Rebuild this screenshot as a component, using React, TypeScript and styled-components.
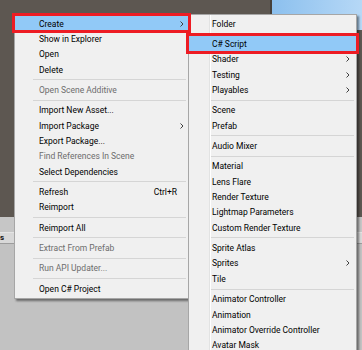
import React from "react";
import styled, { createGlobalStyle } from "styled-components";

const GlobalStyle = createGlobalStyle`
  html, body { margin: 0; padding: 0; }
  body {
    width: 362px;
    height: 350px;
    overflow: hidden;
    font-family: Roboto, "Liberation Sans", sans-serif;
  }
`;

const Screen = styled.div`
  position: relative;
  width: 362px;
  height: 350px;
  display: grid;
  grid-template-rows: 217px 1fr;
  overflow: hidden;
  background: #c2c2c2;
`;

const TopArea = styled.div`
  display: flex;
`;

const SceneView = styled.div`
  flex: 1;
  background: #5d5751;
`;

const GameView = styled.div`
  width: 90px;
  display: flex;
  flex-direction: column;
  border-left: 2px solid #46413c;
  background: #5d5751;
`;

const Sky = styled.div`
  height: 30px;
  background: linear-gradient(90deg, #8cc0ee, #b6d8f6);
`;

const ProjectPanel = styled.div`
  display: flex;
  flex-direction: column;
`;

const Toolbar = styled.div`
  height: 15px;
  background: #c6c6c6;
  border-bottom: 1px solid #e4e4e4;
`;

const TabRow = styled.div`
  height: 10px;
  background: #d8d8d8;
  border-bottom: 1px solid #9c9c9c;
  font-size: 8px;
  font-weight: bold;
  line-height: 10px;
  color: #111;
`;

const Menu = styled.div<{ $left: number; $width: number; $tall?: boolean }>`
  position: absolute;
  top: 14px;
  left: ${(p) => p.$left}px;
  width: ${(p) => p.$width}px;
  ${(p) => p.$tall && "height: 350px;"}
  box-sizing: border-box;
  padding: 1px 0;
  background: #f0f0f0;
  border: 1px solid #a6a6a6;
  box-shadow: 2px 2px 2px rgba(0, 0, 0, 0.45);
`;

const Gutter = styled.div`
  position: absolute;
  top: 0;
  bottom: 0;
  left: 20px;
  width: 1px;
  background: #e2e3e3;
  border-right: 1px solid #ffffff;
`;

const Row = styled.div<{ $indent: number; $right: number; $active?: boolean; $disabled?: boolean }>`
  position: relative;
  height: 15.35px;
  display: flex;
  align-items: center;
  padding-left: ${(p) => p.$indent}px;
  padding-right: ${(p) => p.$right}px;
  font-size: 8.5px;
  color: ${(p) => (p.$disabled ? "#6d6d6d" : "#000")};
  background: ${(p) => (p.$active ? "#91c9f7" : "transparent")};

  ${(p) =>
    p.$active &&
    `&::after {
      content: "";
      position: absolute;
      top: -3px;
      bottom: -2px;
      left: -3px;
      right: -3px;
      border: 3px solid #ed1c24;
      pointer-events: none;
      z-index: 2;
    }`}
`;

const Label = styled.span`
  flex: 1;
  white-space: nowrap;
`;

const Shortcut = styled.span`
  margin-right: 7px;
`;

const Separator = styled.div<{ $indent: number }>`
  height: 5px;
  display: flex;
  align-items: center;
  padding-left: ${(p) => p.$indent}px;
  padding-right: 2px;

  &::before {
    content: "";
    flex: 1;
    height: 1px;
    background: #d5d5d5;
  }
`;

type Item =
  | "sep"
  | { label: string; arrow?: boolean; active?: boolean; disabled?: boolean; shortcut?: string };

const mainItems: Item[] = [
  { label: "Create", arrow: true, active: true },
  { label: "Show in Explorer" },
  { label: "Open" },
  { label: "Delete" },
  "sep",
  { label: "Open Scene Additive", disabled: true },
  "sep",
  { label: "Import New Asset..." },
  { label: "Import Package", arrow: true },
  { label: "Export Package..." },
  { label: "Find References In Scene", disabled: true },
  { label: "Select Dependencies" },
  "sep",
  { label: "Refresh", shortcut: "Ctrl+R" },
  { label: "Reimport" },
  "sep",
  { label: "Reimport All" },
  "sep",
  { label: "Extract From Prefab", disabled: true },
  "sep",
  { label: "Run API Updater...", disabled: true },
  "sep",
  { label: "Open C# Project" },
];

const createItems: Item[] = [
  { label: "Folder" },
  "sep",
  { label: "C# Script", active: true },
  { label: "Shader", arrow: true },
  { label: "Testing", arrow: true },
  { label: "Playables", arrow: true },
  "sep",
  { label: "Scene" },
  { label: "Prefab" },
  "sep",
  { label: "Audio Mixer" },
  "sep",
  { label: "Material" },
  { label: "Lens Flare" },
  { label: "Render Texture" },
  { label: "Lightmap Parameters" },
  { label: "Custom Render Texture" },
  "sep",
  { label: "Sprite Atlas" },
  { label: "Sprites", arrow: true },
  { label: "Tile" },
  "sep",
  { label: "Animator Controller" },
  { label: "Animation" },
  { label: "Animator Override Controller" },
  { label: "Avatar Mask" },
];

const Arrow = () => (
  <svg width="4" height="6" viewBox="0 0 4 6">
    <path d="M0.5 0.5 L3 3 L0.5 5.5" fill="none" stroke="#404040" strokeWidth="1" />
  </svg>
);

function MenuList({ items, indent, sepIndent, right }: { items: Item[]; indent: number; sepIndent: number; right: number }) {
  return (
    <>
      {items.map((it, i) =>
        it === "sep" ? (
          <Separator key={i} $indent={sepIndent} />
        ) : (
          <Row key={i} $indent={indent} $right={right} $active={it.active} $disabled={it.disabled}>
            <Label>{it.label}</Label>
            {it.shortcut && <Shortcut>{it.shortcut}</Shortcut>}
            {it.arrow && <Arrow />}
          </Row>
        )
      )}
    </>
  );
}

export default function App() {
  return (
    <>
      <GlobalStyle />
      <Screen>
        <TopArea>
          <SceneView />
          <GameView>
            <Sky />
          </GameView>
        </TopArea>
        <ProjectPanel>
          <Toolbar />
          <TabRow>s</TabRow>
        </ProjectPanel>

        <Menu $left={14} $width={175}>
          <MenuList items={mainItems} indent={24} sepIndent={18} right={4} />
        </Menu>
        <Menu $left={188} $width={169} $tall>
          <Gutter />
          <MenuList items={createItems} indent={23} sepIndent={21} right={6} />
        </Menu>
      </Screen>
    </>
  );
}
